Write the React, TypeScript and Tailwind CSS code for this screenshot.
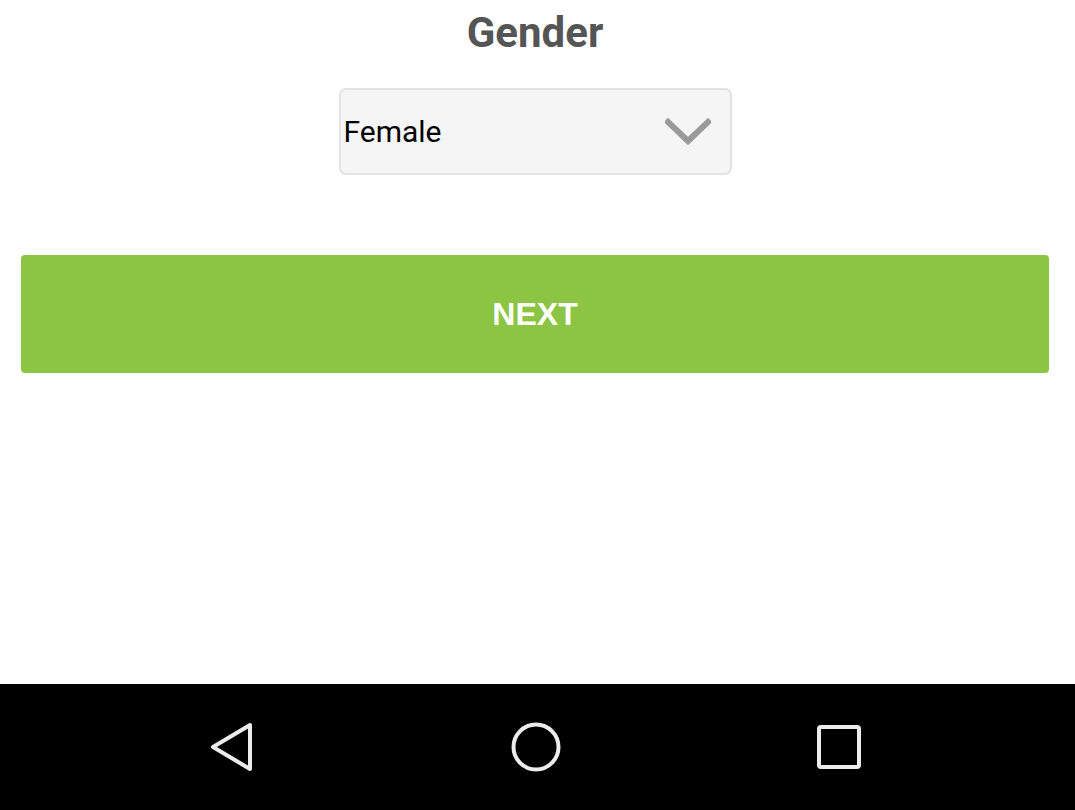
export default function App() {
  return (
    <main className="flex h-[810px] w-[1075px] flex-col bg-white">
      <section className="flex flex-1 flex-col items-center pr-[5px]">
        <h1 className="mt-[8px] font-['Roboto',sans-serif] text-[42px] font-bold leading-[50px] text-[#555555]">
          Gender
        </h1>

        <div className="mt-[30px] flex h-[87px] w-[393px] items-center justify-between rounded-[7px] border-2 border-[#e3e3e3] bg-[#f5f5f5] pl-[3px] pr-[19px]">
          <span className="font-['Roboto',sans-serif] text-[30px] leading-none text-black">Female</span>
          <svg width="46" height="28" viewBox="0 0 46 28" fill="none">
            <path d="M3 4 L23 23 L43 4" stroke="#9a9a9a" strokeWidth="6" strokeLinecap="square" />
          </svg>
        </div>

        <div className="mt-[80px] w-full pl-[21px] pr-[21px]">
          <button className="flex h-[118px] w-full items-center justify-center rounded-[4px] bg-[#8bc543] font-['Liberation_Sans',Arial,sans-serif] text-[32px] font-bold text-white">
            NEXT
          </button>
        </div>
      </section>

      <nav className="flex h-[126px] items-center bg-black">
        <div className="flex w-full items-center justify-between pl-[208px] pr-[212px]">
          <svg width="48" height="52" viewBox="0 0 48 52" fill="none">
            <path d="M42 4 L42 48 L5 26 Z" stroke="#ececec" strokeWidth="4" strokeLinejoin="round" />
          </svg>
          <svg width="52" height="52" viewBox="0 0 52 52" fill="none">
            <circle cx="26" cy="26" r="22.5" stroke="#ececec" strokeWidth="4" />
          </svg>
          <svg width="48" height="48" viewBox="0 0 48 48" fill="none">
            <rect x="4" y="4" width="40" height="40" rx="2" stroke="#ececec" strokeWidth="4" />
          </svg>
        </div>
      </nav>
    </main>
  );
}
